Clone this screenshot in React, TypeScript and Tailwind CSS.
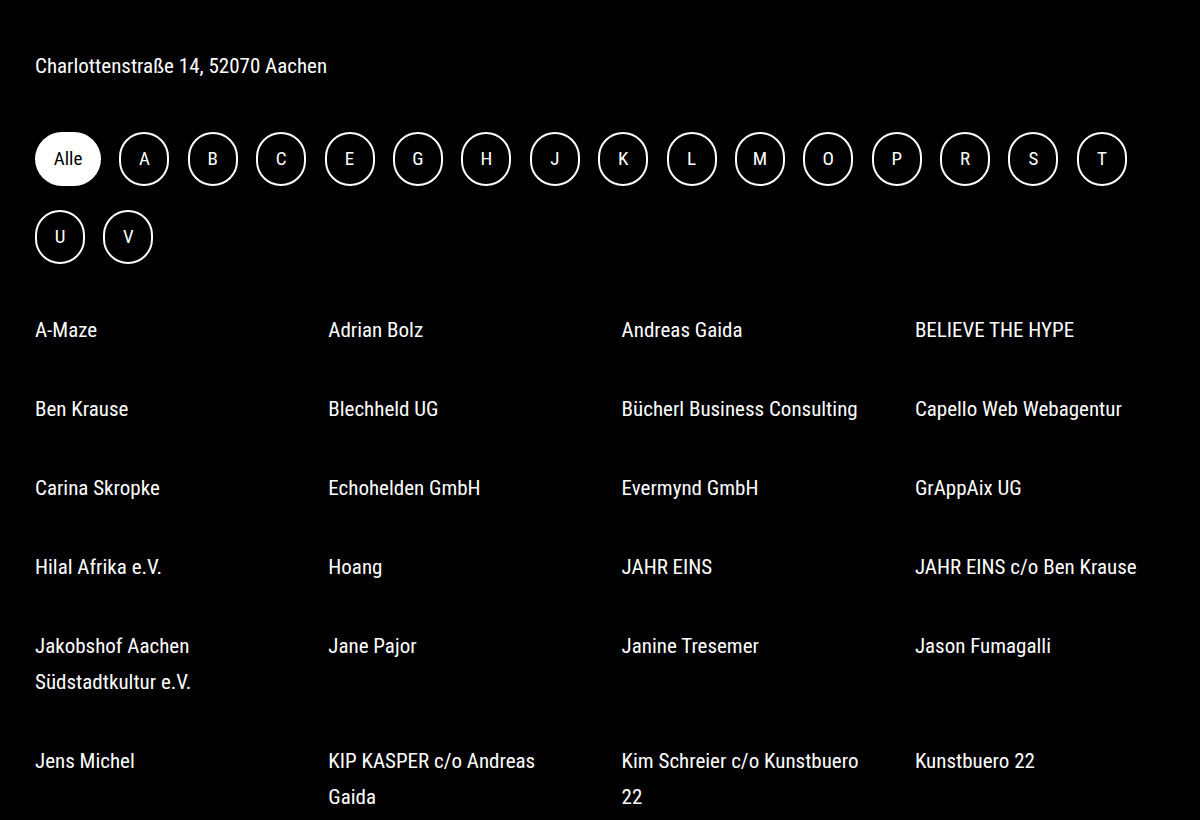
import React from "react";

const letters = ["A", "B", "C", "E", "G", "H", "J", "K", "L", "M", "O", "P", "R", "S", "T", "U", "V"];

const names = [
  "A-Maze",
  "Adrian Bolz",
  "Andreas Gaida",
  "BELIEVE THE HYPE",
  "Ben Krause",
  "Blechheld UG",
  "Bücherl Business Consulting",
  "Capello Web Webagentur",
  "Carina Skropke",
  "Echohelden GmbH",
  "Evermynd GmbH",
  "GrAppAix UG",
  "Hilal Afrika e.V.",
  "Hoang",
  "JAHR EINS",
  "JAHR EINS c/o Ben Krause",
  "Jakobshof Aachen Südstadtkultur e.V.",
  "Jane Pajor",
  "Janine Tresemer",
  "Jason Fumagalli",
  "Jens Michel",
  "KIP KASPER c/o Andreas Gaida",
  "Kim Schreier c/o Kunstbuero 22",
  "Kunstbuero 22",
];

export default function App() {
  return (
    <div className="min-h-screen bg-black px-[35px] pt-[48px] pb-[40px] font-['Roboto_Condensed','Liberation_Sans',sans-serif] text-white">
      <p className="text-[21px] leading-[36px]">Charlottenstraße 14, 52070 Aachen</p>

      <div className="mt-[48px] flex w-[1130px] flex-wrap gap-x-[18.4px] gap-y-[24px]">
        <button className="flex h-[54px] w-[66px] items-center justify-center rounded-full bg-white text-[19px] text-black">
          Alle
        </button>
        {letters.map((l) => (
          <button
            key={l}
            className="flex h-[54px] w-[50px] items-center justify-center rounded-full border-2 border-white text-[19px] text-white"
          >
            {l}
          </button>
        ))}
      </div>

      <div className="mt-[48px] grid grid-cols-[repeat(4,250px)] gap-x-[43.3px] gap-y-[43px] text-[21px] leading-[36px]">
        {names.map((n) => (
          <div key={n}>{n}</div>
        ))}
      </div>
    </div>
  );
}
